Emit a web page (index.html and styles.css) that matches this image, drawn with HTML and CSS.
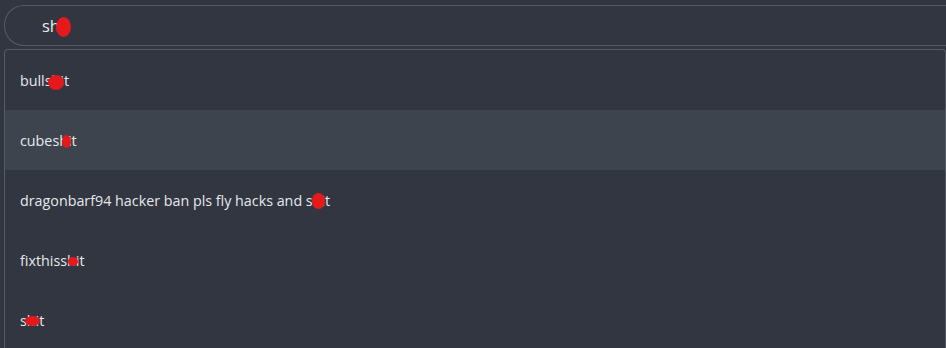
FILE: index.html
```html
<!DOCTYPE html>
<html>
<head>
<meta charset="utf-8">
<link rel="stylesheet" href="styles.css">
</head>
<body>
<div class="page">
  <div class="search">
    <span class="query">sh<span class="hidden">it</span></span>
    <span class="blob" style="left:51px;top:11px;width:15px;height:20px"></span>
  </div>
  <ul class="menu">
    <li class="item"><span class="label">bulls<span class="cen">hi<span class="blob" style="left:-4px;top:4px;width:16px;height:15px"></span></span>t</span></li>
    <li class="item active"><span class="label">cubes<span class="cen">hi<span class="blob" style="left:3px;top:4px;width:9px;height:13px"></span></span>t</span></li>
    <li class="item"><span class="label">dragonbarf94 hacker ban pls fly hacks and s<span class="cen">hi<span class="blob" style="left:-1px;top:2px;width:13px;height:16px"></span></span>t</span></li>
    <li class="item"><span class="label">fixthiss<span class="cen">hi<span class="blob" style="left:1px;top:6px;width:10px;height:9px"></span></span>t</span></li>
    <li class="item"><span class="label">s<span class="cen">hi<span class="blob" style="left:-2px;top:5px;width:15px;height:10px"></span></span>t</span></li>
  </ul>
</div>
</body>
</html>
```
FILE: styles.css
```css
html, body {
  margin: 0;
  padding: 0;
  background: #313641;
  overflow: hidden;
}
.page {
  width: 946px;
  height: 348px;
  position: relative;
  overflow: hidden;
  font-family: "Open Sans", "Noto Sans", sans-serif;
  color: #e6e8ec;
}
.search {
  position: relative;
  margin: 5px 0 0 4px;
  height: 39px;
  width: 960px;
  border: 1px solid #555a65;
  border-right: none;
  border-radius: 20px 0 0 20px;
  display: flex;
  align-items: center;
  padding-left: 37px;
  box-sizing: content-box;
}
.query {
  font-size: 16.5px;
  color: #e8eaee;
}
.hidden { visibility: hidden; }
.menu {
  list-style: none;
  margin: 3px 0 0 4px;
  padding: 0;
  width: 940px;
  border: 1px solid #555a65;
  border-bottom: none;
  border-radius: 4px 4px 0 0;
}
.item {
  position: relative;
  height: 60px;
  display: flex;
  align-items: center;
  padding-left: 15px;
  font-size: 14.3px;
}
.item.active {
  background: #3e444e;
}
.cen {
  position: relative;
}
.blob {
  position: absolute;
  background: #e5191b;
  border-radius: 50%;
}
```
